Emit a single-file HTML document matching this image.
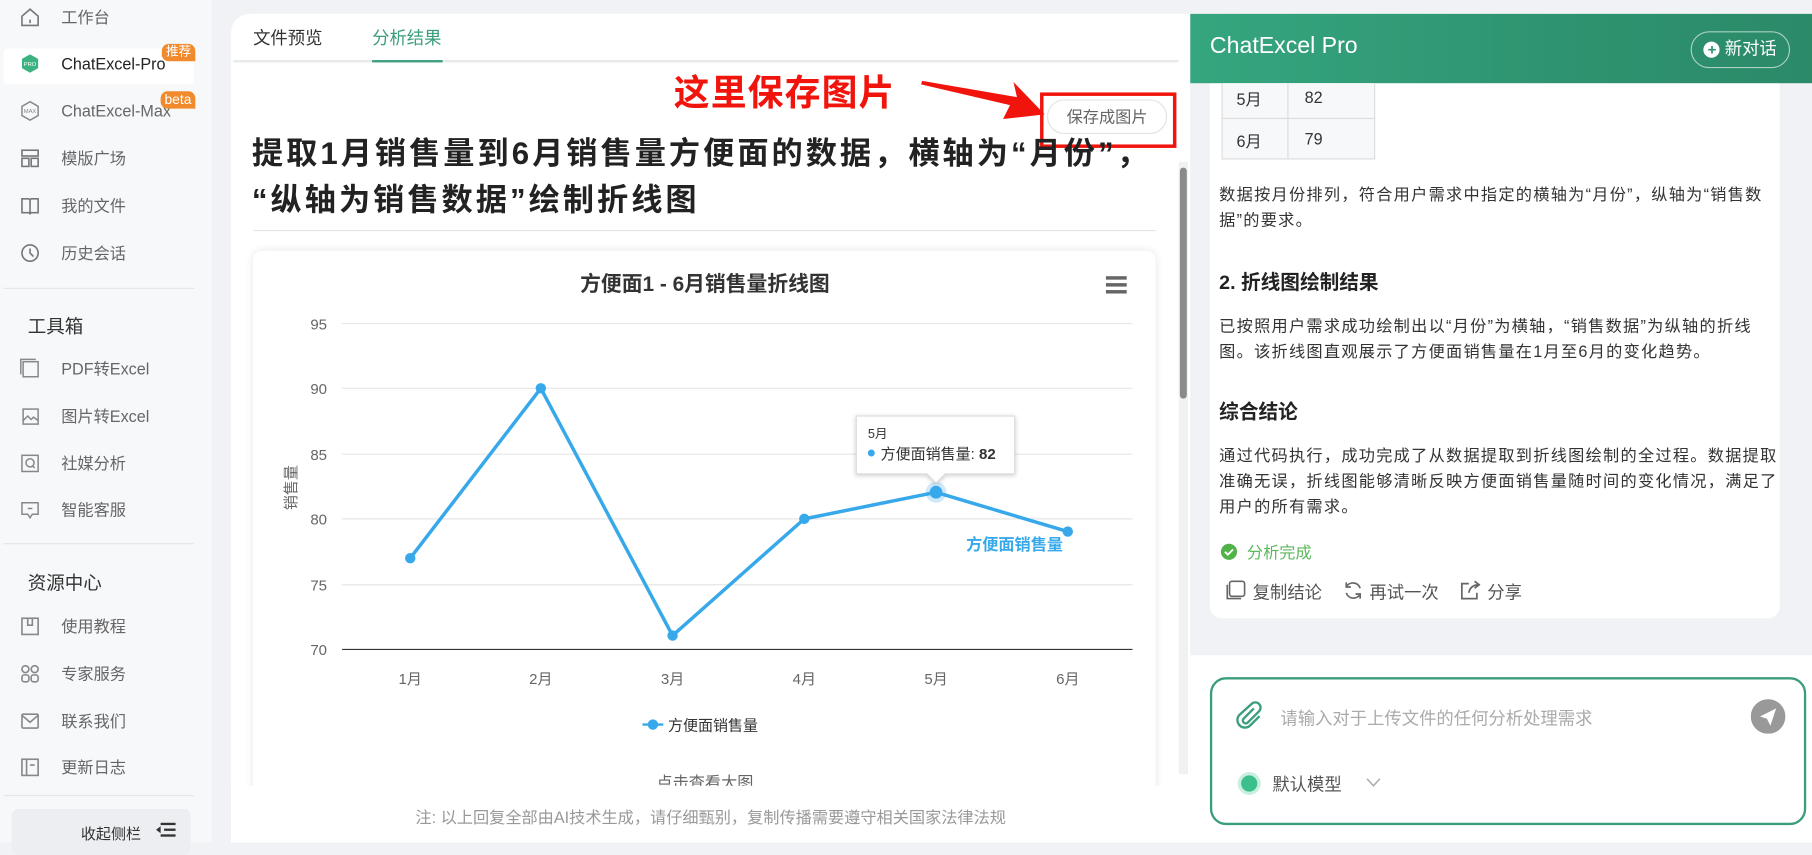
<!DOCTYPE html>
<html><head><meta charset="utf-8"><style>
*{margin:0;padding:0;box-sizing:border-box}
html,body{width:1812px;height:842px;overflow:hidden;background:#f0f2f5}
#w{position:absolute;left:0;top:0;width:1568px;height:729px;transform:scale(1.15561);transform-origin:0 0;font-family:"Liberation Sans","Noto Sans CJK SC",sans-serif;}
.a{position:absolute;white-space:nowrap}
.side{position:absolute;left:0;top:0;width:183px;height:729px;background:#f7f8fa}
.it{position:absolute;left:53px;font-size:14px;color:#666;transform:translateY(-50%)}
.ic{position:absolute;left:17px;width:18px;height:18px;transform:translateY(-50%)}
.sec{position:absolute;left:24px;font-size:16px;color:#333;transform:translateY(-50%)}
.hr{position:absolute;left:3px;width:165px;height:1px;background:#e3e5e8}
.main{position:absolute;left:200px;top:12px;width:830px;height:717px;background:#fff;border-radius:16px 0 0 0}
.p{position:absolute;left:1055px;font-size:14px;color:#333;line-height:22px;white-space:nowrap;letter-spacing:1.1px}
</style></head><body><div id="w">
<div class="side">
<svg class="ic" style="top:15px" viewBox="0 0 18 18" fill="none" stroke="#777" stroke-width="1.4"><path d="M2 8L9 2l7 6v8H2z"/><path d="M9 11v3"/></svg><div class="it" style="top:15px">工作台</div>
<div class="a" style="left:3px;top:42px;width:165px;height:31px;background:#fff;border-radius:4px"></div>
<svg class="ic" style="top:55px" viewBox="0 0 18 18"><path d="M9 1l7 4v8l-7 4-7-4V5z" fill="#3bb27f"/><text x="9" y="11" font-size="5" fill="#fff" text-anchor="middle" font-family="Liberation Sans">PRO</text></svg><div class="it" style="top:55px;color:#222">ChatExcel-Pro</div>
<div class="a" style="left:140px;top:38px;width:29px;height:15px;background:#f08a2c;border-radius:6px 6px 0 6px;color:#fff;font-size:11px;text-align:center;line-height:15px">推荐</div>
<svg class="ic" style="top:96px" viewBox="0 0 18 18" fill="none" stroke="#888" stroke-width="1.3"><path d="M9 1l7 4v8l-7 4-7-4V5z"/><text x="9" y="11" font-size="5" fill="#888" stroke="none" text-anchor="middle" font-family="Liberation Sans">MAX</text></svg><div class="it" style="top:96px">ChatExcel-Max</div>
<div class="a" style="left:139px;top:79px;width:30px;height:15px;background:#f08a2c;border-radius:6px 6px 0 6px;color:#fff;font-size:12px;text-align:center;line-height:14px">beta</div>
<svg class="ic" style="top:137px" viewBox="0 0 18 18" fill="none" stroke="#777" stroke-width="1.4"><rect x="2" y="2" width="14" height="5"/><rect x="2" y="9" width="6" height="7"/><rect x="10" y="9" width="6" height="7"/></svg><div class="it" style="top:137px">模版广场</div>
<svg class="ic" style="top:178px" viewBox="0 0 18 18" fill="none" stroke="#777" stroke-width="1.4"><path d="M2 3h6l1 1 1-1h6v12h-6l-1 1-1-1H2z"/><path d="M9 4v11"/></svg><div class="it" style="top:178px">我的文件</div>
<svg class="ic" style="top:219px" viewBox="0 0 18 18" fill="none" stroke="#777" stroke-width="1.4"><circle cx="9" cy="9" r="7"/><path d="M9 5v4l3 3"/></svg><div class="it" style="top:219px">历史会话</div>
<div class="hr" style="top:249px"></div>
<div class="sec" style="top:281px">工具箱</div>
<svg class="ic" style="top:319px" viewBox="0 0 18 18" fill="none" stroke="#888" stroke-width="1.3"><rect x="3" y="3" width="13" height="13"/><path d="M1 14V1h13"/></svg><div class="it" style="top:319px">PDF转Excel</div>
<svg class="ic" style="top:360px" viewBox="0 0 18 18" fill="none" stroke="#888" stroke-width="1.3"><rect x="3" y="3" width="13" height="13"/><path d="M3 13l4-4 3 3 2-2 4 3"/></svg><div class="it" style="top:360px">图片转Excel</div>
<svg class="ic" style="top:401px" viewBox="0 0 18 18" fill="none" stroke="#888" stroke-width="1.3"><rect x="2" y="2" width="14" height="14"/><circle cx="9" cy="8.5" r="3.5"/><path d="M11 11l2 2"/></svg><div class="it" style="top:401px">社媒分析</div>
<svg class="ic" style="top:441px" viewBox="0 0 18 18" fill="none" stroke="#888" stroke-width="1.3"><path d="M2 3h14v10h-5l-2 3-2-3H2z"/><path d="M7 8h4"/></svg><div class="it" style="top:441px">智能客服</div>
<div class="hr" style="top:470px"></div>
<div class="sec" style="top:503px">资源中心</div>
<svg class="ic" style="top:542px" viewBox="0 0 18 18" fill="none" stroke="#888" stroke-width="1.4"><rect x="2" y="2" width="14" height="14"/><path d="M7 2v6h4V2"/></svg><div class="it" style="top:542px">使用教程</div>
<svg class="ic" style="top:583px" viewBox="0 0 18 18" fill="none" stroke="#888" stroke-width="1.4"><rect x="2" y="2" width="6" height="6" rx="3"/><rect x="10" y="2" width="6" height="6" rx="3"/><rect x="2" y="10" width="6" height="6" rx="2"/><rect x="10" y="10" width="6" height="6" rx="2"/></svg><div class="it" style="top:583px">专家服务</div>
<svg class="ic" style="top:624px" viewBox="0 0 18 18" fill="none" stroke="#888" stroke-width="1.4"><rect x="2" y="3" width="14" height="12" rx="1"/><path d="M2 4l7 6 7-6"/></svg><div class="it" style="top:624px">联系我们</div>
<svg class="ic" style="top:664px" viewBox="0 0 18 18" fill="none" stroke="#888" stroke-width="1.4"><rect x="2" y="2" width="14" height="14"/><path d="M6 2v14M9 7h4"/></svg><div class="it" style="top:664px">更新日志</div>
<div class="hr" style="top:688px"></div>
<div class="a" style="left:10px;top:700px;width:155px;height:40px;background:#eceef1;border-radius:6px"></div>
<div class="a" style="left:70px;top:711px;font-size:13px;color:#333">收起侧栏</div>
<svg class="a" style="left:135px;top:711px" width="17" height="14" viewBox="0 0 17 14" fill="#333"><rect x="4" y="1" width="13" height="2"/><rect x="7" y="6" width="10" height="2"/><rect x="4" y="11" width="13" height="2"/><path d="M0 7l4-3v6z"/></svg>
</div>

<div class="main"></div>
<div class="a" style="left:219px;top:22px;font-size:15px;color:#333">文件预览</div>
<div class="a" style="left:322px;top:22px;font-size:15px;color:#3a9d7d">分析结果</div>
<div class="a" style="left:202px;top:52px;width:818px;height:2px;background:#e6e8eb"></div>
<div class="a" style="left:322px;top:52px;width:61px;height:2px;background:#3a9d7d"></div>
<div class="a" style="left:583px;top:55px;font-size:31px;font-weight:bold;color:#f0140c;letter-spacing:1px">这里保存图片</div>
<svg class="a" style="left:795px;top:60px" width="115" height="45"><path d="M3 10L85 24l-3-13 27 28-36 4 6-12L2 13z" fill="#f0140c"/></svg>
<div class="a" style="left:906px;top:86px;width:104px;height:30px;border:1px solid #e3e3e3;border-radius:15px;font-size:14px;color:#666;text-align:center;line-height:28px">保存成图片</div>
<div class="a" style="left:900px;top:80px;width:118px;height:48px;border:3px solid #f0140c"></div>
<div class="a" style="left:218px;top:113px;font-size:27px;font-weight:bold;color:#222;line-height:40px;letter-spacing:2.6px">提取1月销售量到6月销售量方便面的数据，横轴为“月份”，<br>“纵轴为销售数据”绘制折线图</div>
<div class="a" style="left:219px;top:199px;width:781px;height:1px;background:#e5e5e5"></div>
<div class="a" style="left:1020px;top:140px;width:8px;height:530px;background:#f1f1f1"></div>
<div class="a" style="left:1021px;top:145px;width:6px;height:200px;background:#8a8a8a;border-radius:3px"></div>

<div class="a" style="left:219px;top:217px;width:781px;height:470px;background:#fff;border-radius:8px;box-shadow:0 0 8px rgba(0,0,0,.1);overflow:hidden">
<svg width="781" height="470" style="font-family:'Liberation Sans','Noto Sans CJK SC',sans-serif">
<g transform="translate(-219,-217)">
<text x="610" y="252" font-size="18" font-weight="bold" fill="#333" text-anchor="middle">方便面1 - 6月销售量折线图</text>
<g fill="#666"><rect x="957" y="239" width="18" height="3"/><rect x="957" y="245" width="18" height="3"/><rect x="957" y="251" width="18" height="3"/></g>
<g stroke="#e6e6e6"><path d="M296 280H980M296 336H980M296 393H980M296 449H980M296 506H980"/></g>
<path d="M296 562H980" stroke="#333"/>
<g font-size="13" fill="#666" text-anchor="end"><text x="283" y="285">95</text><text x="283" y="341">90</text><text x="283" y="398">85</text><text x="283" y="454">80</text><text x="283" y="511">75</text><text x="283" y="567">70</text></g>
<text transform="translate(256,422) rotate(-90)" font-size="13" fill="#666" text-anchor="middle">销售量</text>
<g font-size="13" fill="#666" text-anchor="middle"><text x="355" y="592">1月</text><text x="468" y="592">2月</text><text x="582" y="592">3月</text><text x="696" y="592">4月</text><text x="810" y="592">5月</text><text x="924" y="592">6月</text></g>
<polyline points="355,483 468,336 582,550 696,449 810,426 924,460" fill="none" stroke="#37a8ea" stroke-width="3"/>
<circle cx="810" cy="426" r="9" fill="#37a8ea" opacity=".25"/>
<g fill="#37a8ea"><circle cx="355" cy="483" r="4.5"/><circle cx="468" cy="336" r="4.5"/><circle cx="582" cy="550" r="4.5"/><circle cx="696" cy="449" r="4.5"/><circle cx="810" cy="426" r="5.5"/><circle cx="924" cy="460" r="4.5"/></g>
<text x="836" y="476" font-size="14" fill="#37a8ea" font-weight="bold">方便面销售量</text>
<path d="M741 360h137v50h-60l-8 8-8-8h-61z" fill="#fff" stroke="#ddd" style="filter:drop-shadow(0 1px 2px rgba(0,0,0,.2))"/>
<text x="751" y="379" font-size="11" fill="#333">5月</text>
<circle cx="754" cy="392" r="3" fill="#37a8ea"/>
<text x="762" y="397" font-size="13" fill="#333">方便面销售量: <tspan font-weight="bold">82</tspan></text>
<path d="M556 627h18" stroke="#37a8ea" stroke-width="2"/><circle cx="565" cy="627" r="4.5" fill="#37a8ea"/>
<text x="578" y="632" font-size="13" fill="#333">方便面销售量</text>
<text x="610" y="682" font-size="14" fill="#666" text-anchor="middle">点击查看大图</text>
</g></svg></div>
<div class="a" style="left:200px;top:680px;width:830px;height:49px;background:#fff"></div>
<div class="a" style="left:615px;top:697px;font-size:14px;color:#999;transform:translateX(-50%)">注: 以上回复全部由AI技术生成，请仔细甄别，复制传播需要遵守相关国家法律法规</div>

<div class="a" style="left:1030px;top:12px;width:538px;height:555px;background:#f0f2f5"></div>
<div class="a" style="left:1047px;top:60px;width:493px;height:475px;background:#fff;border-radius:10px"></div>
<div class="a" style="left:1030px;top:12px;width:538px;height:60px;background:linear-gradient(90deg,#35a67f,#2e9370 60%,#2b8a69)"></div>
<div class="a" style="left:1047px;top:29px;font-size:20px;color:#fff">ChatExcel Pro</div>
<div class="a" style="left:1463px;top:27px;width:86px;height:32px;border:1px solid rgba(255,255,255,.6);border-radius:16px;color:#fff;font-size:15px;line-height:30px;display:flex;align-items:center;justify-content:center"><span style="display:inline-block;width:14px;height:14px;border-radius:50%;background:#fff;color:#2e9370;font-size:13px;line-height:14px;text-align:center;font-weight:bold;margin-right:4px">+</span>新对话</div>
<div class="a" style="left:1057px;top:72px;width:133px;height:66px;border:1px solid #ddd;border-top:none;background:#f7f8fa"></div>
<div class="a" style="left:1057px;top:102px;width:133px;height:1px;background:#ddd"></div>
<div class="a" style="left:1114px;top:72px;width:1px;height:66px;background:#ddd"></div>
<div class="a" style="left:1070px;top:76px;font-size:14px;color:#333">5月</div><div class="a" style="left:1129px;top:76px;font-size:14px;color:#333">82</div>
<div class="a" style="left:1070px;top:112px;font-size:14px;color:#333">6月</div><div class="a" style="left:1129px;top:112px;font-size:14px;color:#333">79</div>
<div class="p" style="top:157px">数据按月份排列，符合用户需求中指定的横轴为“月份”，纵轴为“销售数<br>据”的要求。</div>
<div class="a" style="left:1055px;top:230px;font-size:17px;font-weight:bold;color:#222">2. 折线图绘制结果</div>
<div class="p" style="top:271px">已按照用户需求成功绘制出以“月份”为横轴，“销售数据”为纵轴的折线<br>图。该折线图直观展示了方便面销售量在1月至6月的变化趋势。</div>
<div class="a" style="left:1055px;top:342px;font-size:17px;font-weight:bold;color:#222">综合结论</div>
<div class="p" style="top:383px">通过代码执行，成功完成了从数据提取到折线图绘制的全过程。数据提取<br>准确无误，折线图能够清晰反映方便面销售量随时间的变化情况，满足了<br>用户的所有需求。</div>
<svg class="a" style="left:1056px;top:470px" width="15" height="15"><circle cx="7.5" cy="7.5" r="7" fill="#52b24a"/><path d="M4 7.5l2.5 2.5 4.5-4.5" stroke="#fff" stroke-width="1.6" fill="none"/></svg>
<div class="a" style="left:1079px;top:468px;font-size:14px;color:#5cb85c">分析完成</div>
<svg class="a" style="left:1059px;top:501px" width="20" height="20" fill="none" stroke="#666" stroke-width="1.4"><rect x="5" y="2" width="13" height="13" rx="2"/><path d="M3 5v12h12"/></svg>
<div class="a" style="left:1084px;top:502px;font-size:15px;color:#555">复制结论</div>
<svg class="a" style="left:1162px;top:502px" width="18" height="18" fill="none" stroke="#666" stroke-width="1.5"><path d="M15 7A6.5 6.5 0 0 0 3 6M3 11a6.5 6.5 0 0 0 12 1"/><path d="M3 2v4h4M15 16v-4h-4"/></svg>
<div class="a" style="left:1185px;top:502px;font-size:15px;color:#555">再试一次</div>
<svg class="a" style="left:1263px;top:502px" width="18" height="18" fill="none" stroke="#666" stroke-width="1.5"><path d="M8 3H2v13h13v-5"/><path d="M8 11c1-5 4-7 9-7M13 1l4 3-4 3"/></svg>
<div class="a" style="left:1287px;top:502px;font-size:15px;color:#555">分享</div>

<div class="a" style="left:1030px;top:567px;width:538px;height:162px;background:#fff"></div>
<div class="a" style="left:1047px;top:586px;width:516px;height:128px;border:2px solid #3a9d7d;border-radius:14px"></div>
<svg class="a" style="left:1068px;top:606px" width="26" height="26" fill="none" stroke="#3a9d7d" stroke-width="2"><path d="M17 7l-9 9a2.5 2.5 0 0 0 3.5 3.5l10-10a4.5 4.5 0 0 0-6.4-6.4L4.7 12.5a6.5 6.5 0 0 0 9.2 9.2l8-8"/></svg>
<div class="a" style="left:1108px;top:611px;font-size:15px;color:#aaa">请输入对于上传文件的任何分析处理需求</div>
<svg class="a" style="left:1515px;top:605px" width="30" height="30"><circle cx="15" cy="15" r="15" fill="#999"/><path d="M8 15l14-7-5 15-3-6z" fill="#fff"/></svg>
<div class="a" style="left:1071px;top:668px;width:20px;height:20px;border-radius:50%;background:#c9efe0"></div>
<div class="a" style="left:1074px;top:671px;width:14px;height:14px;border-radius:50%;background:#3bbf8c"></div>
<div class="a" style="left:1101px;top:668px;font-size:15px;color:#555">默认模型</div>
<svg class="a" style="left:1182px;top:673px" width="13" height="9" fill="none" stroke="#aaa" stroke-width="1.3"><path d="M1 1l5.5 6L12 1"/></svg>
</div></body></html>
